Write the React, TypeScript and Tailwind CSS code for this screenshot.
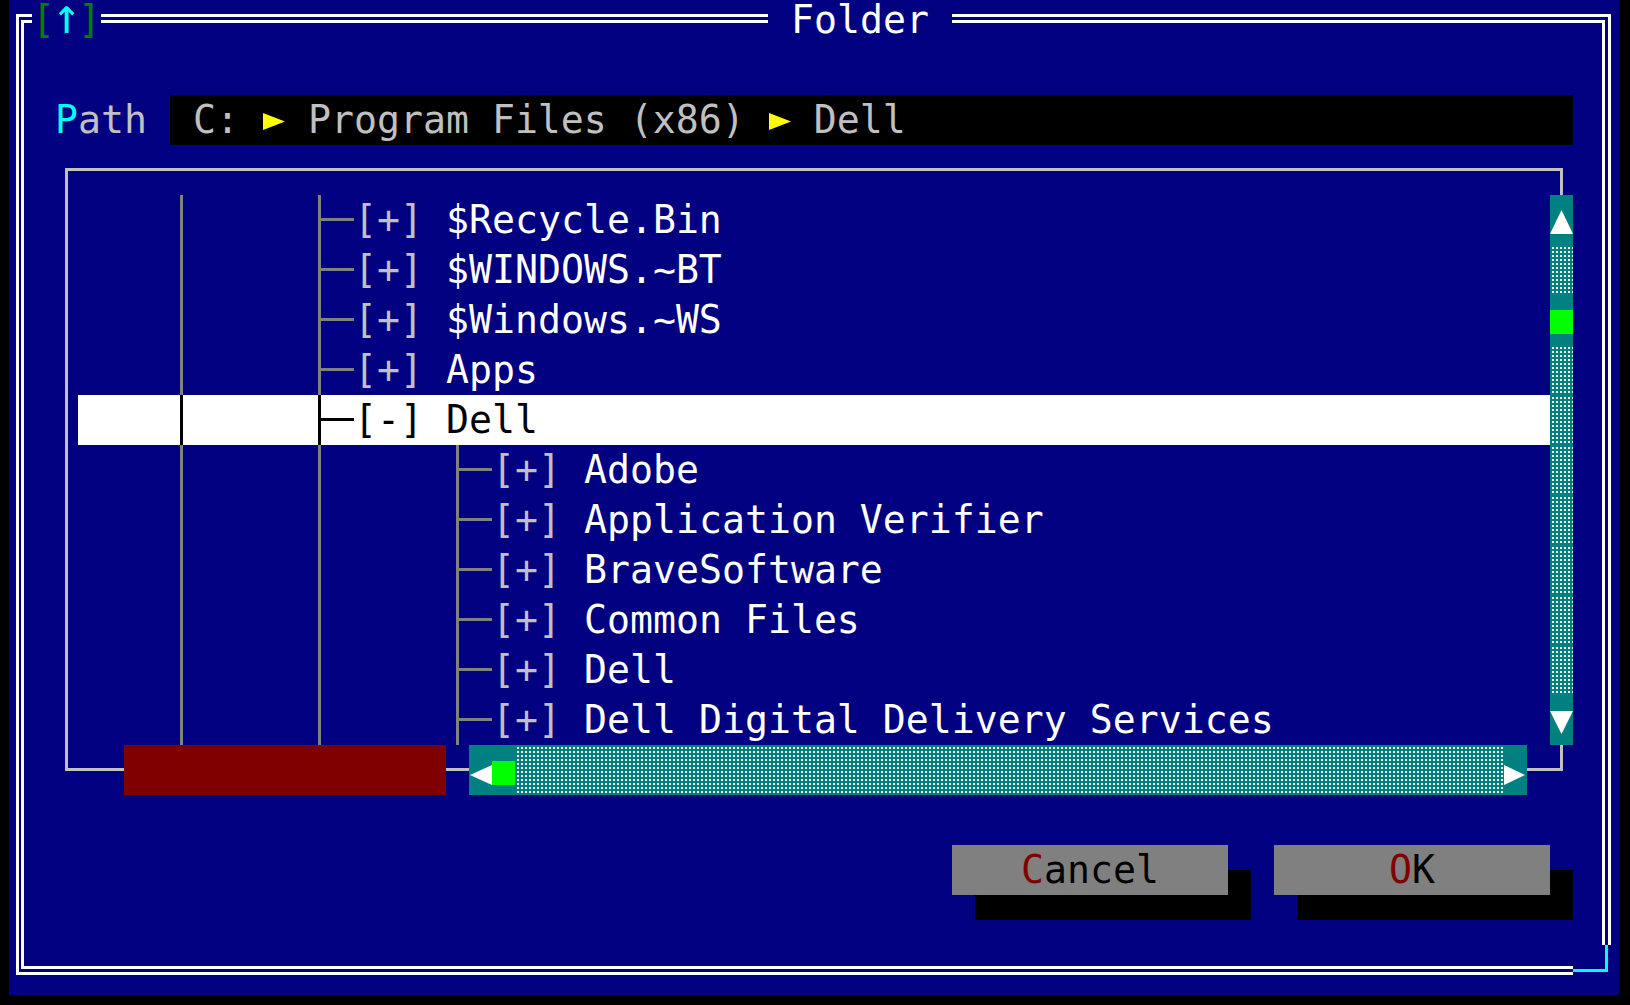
import React from "react";

const GRAY = "bg-[#808080]";
const DOTS =
  "bg-[#008080] bg-[image:linear-gradient(90deg,#008080_50%,transparent_50%),linear-gradient(#008080_50%,#f8f6e4_50%)] bg-[length:4px_4px]";

// one character cell of box drawing
function VLine({ color }: { color: string }) {
  return (
    <div className="w-[23px] h-[50px] shrink-0">
      <div className={`ml-[10px] w-[3px] h-full ${color}`} />
    </div>
  );
}

function Tee({ color }: { color: string }) {
  return (
    <div className="flex w-[23px] h-[50px] shrink-0">
      <div className={`ml-[10px] w-[3px] h-full ${color}`} />
      <div className={`mt-[23px] h-[3px] flex-1 ${color}`} />
    </div>
  );
}

function HLine({ color, w = "w-[23px]" }: { color: string; w?: string }) {
  return (
    <div className={`${w} h-[50px] shrink-0 pt-[23px]`}>
      <div className={`h-[3px] ${color}`} />
    </div>
  );
}

function Blank({ w }: { w: string }) {
  return <div className={`${w} h-[50px] shrink-0`} />;
}

function TreeRow({
  name,
  depth,
  open,
  selected,
}: {
  name: string;
  depth: number;
  open?: boolean;
  selected?: boolean;
}) {
  const line = selected ? "bg-black" : GRAY;
  return (
    <div className={`flex h-[50px] w-[1472px] ${selected ? "bg-white" : ""}`}>
      <Blank w="w-[92px]" />
      <VLine color={line} />
      <Blank w="w-[115px]" />
      {depth === 0 ? (
        <>
          <Tee color={line} />
          <HLine color={line} />
        </>
      ) : (
        <>
          <VLine color={line} />
          <Blank w="w-[23px]" />
          <Blank w="w-[92px]" />
          <Tee color={line} />
          <HLine color={line} />
        </>
      )}
      <span className={`whitespace-pre ${selected ? "text-black" : "text-[#c0c0c0]"}`}>
        {open ? "[-]" : "[+]"}
      </span>
      <span className={`whitespace-pre ${selected ? "text-black" : "text-white"}`}>
        {" " + name}
      </span>
    </div>
  );
}

function PathArrow() {
  return (
    <svg width="23" height="50" className="block shrink-0">
      <polygon points="1,18 23,26.5 1,35" fill="#ffff00" />
    </svg>
  );
}

function VScroll() {
  return (
    <div className="flex flex-col w-[23px] shrink-0">
      <div className="h-[50px] bg-[#008080] pt-[15px]">
        <svg width="23" height="24" className="block">
          <polygon points="0,24 11.5,0 23,24" fill="#ffffff" />
        </svg>
      </div>
      <div className={`h-[50px] ${DOTS}`} />
      <div className="h-[50px] bg-[#008080] pt-[15px]">
        <div className="h-[24px] bg-[#00ff00]" />
      </div>
      {[0, 1, 2, 3, 4, 5, 6].map((i) => (
        <div key={i} className={`h-[50px] ${DOTS}`} />
      ))}
      <div className="h-[50px] bg-[#008080] pt-[16px]">
        <svg width="23" height="23" className="block">
          <polygon points="0,0 23,0 11.5,23" fill="#ffffff" />
        </svg>
      </div>
    </div>
  );
}

function HScroll() {
  return (
    <div className="flex w-[1058px] h-[50px] shrink-0">
      <div className="w-[23px] bg-[#008080]">
        <svg width="23" height="50" className="block">
          <polygon points="1,30 23,20 23,40" fill="#ffffff" />
        </svg>
      </div>
      <div className="w-[23px] bg-[#008080] pt-[16px]">
        <div className="h-[24px] bg-[#00ff00]" />
      </div>
      <div className={`w-[989px] ${DOTS}`} />
      <div className="w-[23px] bg-[#008080]">
        <svg width="23" height="50" className="block">
          <polygon points="0,20 21,30 0,40" fill="#ffffff" />
        </svg>
      </div>
    </div>
  );
}

function Button({ hot, rest }: { hot: string; rest: string }) {
  return (
    <div className="flex flex-col w-[299px] shrink-0">
      <div className="flex h-[50px]">
        <div className="w-[276px] bg-[#808080] text-center whitespace-pre">
          <span className="text-[#800000]">{hot}</span>
          <span className="text-black">{rest}</span>
        </div>
        <div className="w-[23px] pt-[25px]">
          <div className="h-[25px] bg-black" />
        </div>
      </div>
      <div className="ml-[23px] w-[276px] h-[25px] bg-black" />
    </div>
  );
}

const top = ["$Recycle.Bin", "$WINDOWS.~BT", "$Windows.~WS", "Apps"];
const kids = [
  "Adobe",
  "Application Verifier",
  "BraveSoftware",
  "Common Files",
  "Dell",
  "Dell Digital Delivery Services",
];

export default function App() {
  const box = "border-[#c0c0c0]";
  return (
    <div className="w-[1630px] h-[1005px] bg-black overflow-hidden pl-[9px] font-['DejaVu_Sans_Mono',monospace] text-[38.2px] leading-[50px]">
      <div className="-mt-[5px] w-[1610px] h-[1000px] bg-[#000080] flex flex-col">
        {/* title row */}
        <div className="flex h-[50px] shrink-0">
          <div className="w-[23px] shrink-0">
            <div className="ml-[7px] mt-[19px] w-[16px] h-[31px] border-l-[3px] border-t-[3px] border-white">
              <div className="ml-[2px] mt-[3px] h-[25px] border-l-[3px] border-t-[3px] border-white" />
            </div>
          </div>
          <div className="w-[69px] mt-[5px] h-[40px] leading-[40px] shrink-0 whitespace-pre">
            <span className="text-[#008000]">[</span>
            <span className="inline-block w-[23px] text-center scale-x-125 scale-y-130 origin-[50%_33px] text-[#00ffff]">↑</span>
            <span className="text-[#008000]">]</span>
          </div>
          <div className="w-[667px] h-[9px] mt-[19px] border-y-[3px] border-white shrink-0" />
          <div className="w-[184px] mt-[5px] h-[40px] leading-[40px] shrink-0 whitespace-pre text-white"> Folder </div>
          <div className="w-[644px] h-[9px] mt-[19px] border-y-[3px] border-white shrink-0" />
          <div className="w-[23px] shrink-0">
            <div className="mt-[19px] w-[15px] h-[31px] border-r-[3px] border-t-[3px] border-white">
              <div className="mt-[3px] w-[9px] h-[25px] border-r-[3px] border-t-[3px] border-white" />
            </div>
          </div>
        </div>

        {/* body */}
        <div className="flex h-[900px] shrink-0">
          <div className="w-[23px] shrink-0">
            <div className="ml-[7px] w-[8px] h-full border-x-[3px] border-white" />
          </div>

          <div className="w-[1564px] shrink-0 flex flex-col">
            <div className="h-[50px]" />

            {/* path */}
            <div className="flex h-[50px]">
              <Blank w="w-[23px]" />
              <div className="w-[92px] shrink-0">
                <span className="text-[#00ffff]">P</span>
                <span className="text-[#c0c0c0]">ath</span>
              </div>
              <Blank w="w-[23px]" />
              <div className="flex w-[1403px] shrink-0 bg-black text-[#c0c0c0] whitespace-pre">
                <span> C: </span>
                <PathArrow />
                <span> Program Files (x86) </span>
                <PathArrow />
                <span> Dell</span>
              </div>
            </div>

            {/* tree box */}
            <div className="ml-[23px] w-[1518px] flex flex-col">
              <div className="flex h-[50px]">
                <div className="w-[23px] pt-[23px] pl-[10px] shrink-0">
                  <div className={`h-[27px] border-l-[3px] border-t-[3px] ${box}`} />
                </div>
                <HLine color="bg-[#c0c0c0]" w="w-[1472px]" />
                <div className="w-[23px] pt-[23px] shrink-0">
                  <div className={`w-[13px] h-[27px] border-r-[3px] border-t-[3px] ${box}`} />
                </div>
              </div>

              <div className="flex h-[550px]">
                <div className="w-[23px] shrink-0">
                  <div className="ml-[10px] w-[3px] h-full bg-[#c0c0c0]" />
                </div>
                <div className="w-[1472px] flex flex-col shrink-0">
                  {top.map((n) => (
                    <TreeRow key={n} name={n} depth={0} />
                  ))}
                  <TreeRow name="Dell" depth={0} open selected />
                  {kids.map((n) => (
                    <TreeRow key={n} name={n} depth={1} />
                  ))}
                </div>
                <VScroll />
              </div>

              <div className="flex h-[50px]">
                <div className="w-[23px] shrink-0">
                  <div className={`ml-[10px] h-[26px] border-l-[3px] border-b-[3px] ${box}`} />
                </div>
                <HLine color="bg-[#c0c0c0]" w="w-[46px]" />
                <div className="w-[322px] h-[50px] bg-[#800000] shrink-0" />
                <HLine color="bg-[#c0c0c0]" />
                <HScroll />
                <HLine color="bg-[#c0c0c0]" />
                <div className="w-[23px] shrink-0">
                  <div className={`w-[13px] h-[26px] border-r-[3px] border-b-[3px] ${box}`} />
                </div>
              </div>
            </div>

            <div className="h-[50px]" />

            {/* buttons */}
            <div className="flex h-[100px] pl-[920px]">
              <Button hot="C" rest="ancel" />
              <Blank w="w-[23px]" />
              <Button hot="O" rest="K" />
            </div>
          </div>

          <div className="w-[23px] shrink-0">
            <div className="ml-[6px] w-[9px] h-full border-x-[3px] border-white" />
          </div>
        </div>

        {/* bottom row */}
        <div className="flex h-[50px] shrink-0">
          <div className="w-[23px] shrink-0">
            <div className="ml-[7px] w-[16px] h-[30px] border-l-[3px] border-b-[3px] border-white">
              <div className="ml-[2px] h-[24px] border-l-[3px] border-b-[3px] border-white" />
            </div>
          </div>
          <div className="w-[1541px] h-[9px] mt-[21px] border-y-[3px] border-white shrink-0" />
          <div className="w-[46px] shrink-0">
            <div className="w-[35px] h-[27px] border-r-[3px] border-b-[3px] border-[#00ffff]" />
          </div>
        </div>
      </div>
    </div>
  );
}
